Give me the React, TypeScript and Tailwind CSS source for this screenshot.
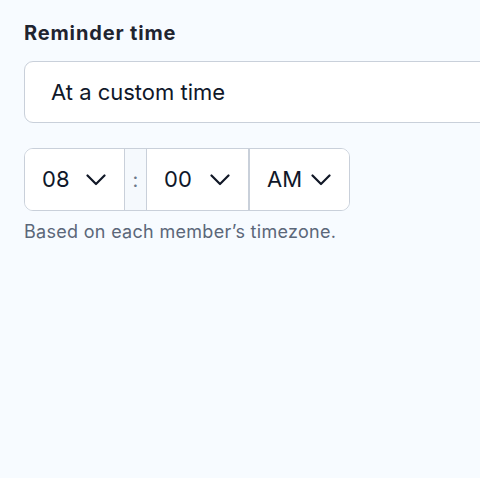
import React from "react";

function Chevron() {
  return (
    <svg width="20" height="12" viewBox="0 0 20 12" fill="none" className="shrink-0">
      <path d="M1.5 1.5 L10 10 L18.5 1.5" stroke="#111827" strokeWidth="2.2" strokeLinecap="round" strokeLinejoin="round" />
    </svg>
  );
}

function Segment({ value, className }: { value: string; className?: string }) {
  return (
    <div className={"flex h-full items-center justify-between bg-white pl-[17px] pr-[18px] " + (className ?? "")}>
      <span className="text-[22px] text-[#0f1729]">{value}</span>
      <Chevron />
    </div>
  );
}

export default function App() {
  return (
    <div className="min-h-[478px] w-[480px] overflow-hidden bg-[#f7fbff] pl-6 pt-[19px] font-['Inter',sans-serif]">
      <h2 className="text-[20px] font-bold leading-[28px] tracking-[0.85px] text-[#1f2430]">Reminder time</h2>
      <div className="mt-[14px] flex h-[62px] w-[480px] items-center rounded-[9px] border border-[#c9d0da] bg-white pl-[26px] text-[22px] text-[#0f1729]">
        At a custom time
      </div>
      <div className="mt-[25px] flex h-[63px] w-[326px] overflow-hidden rounded-[9px] border border-[#c9d0da] bg-white">
        <Segment value="08" className="w-[99px]" />
        <div className="flex h-full w-[23px] items-center justify-center border-x border-[#c9d0da] bg-[#f5f9fd] text-[20px] text-[#6b7789]">
          :
        </div>
        <Segment value="00" className="w-[101px]" />
        <div className="h-full w-[2px] bg-[#c9d0da]" />
        <Segment value="AM" className="w-[99px]" />
      </div>
      <p className="mt-[7px] text-[18px] tracking-[0.3px] text-[#5b6779]">Based on each member’s timezone.</p>
    </div>
  );
}
